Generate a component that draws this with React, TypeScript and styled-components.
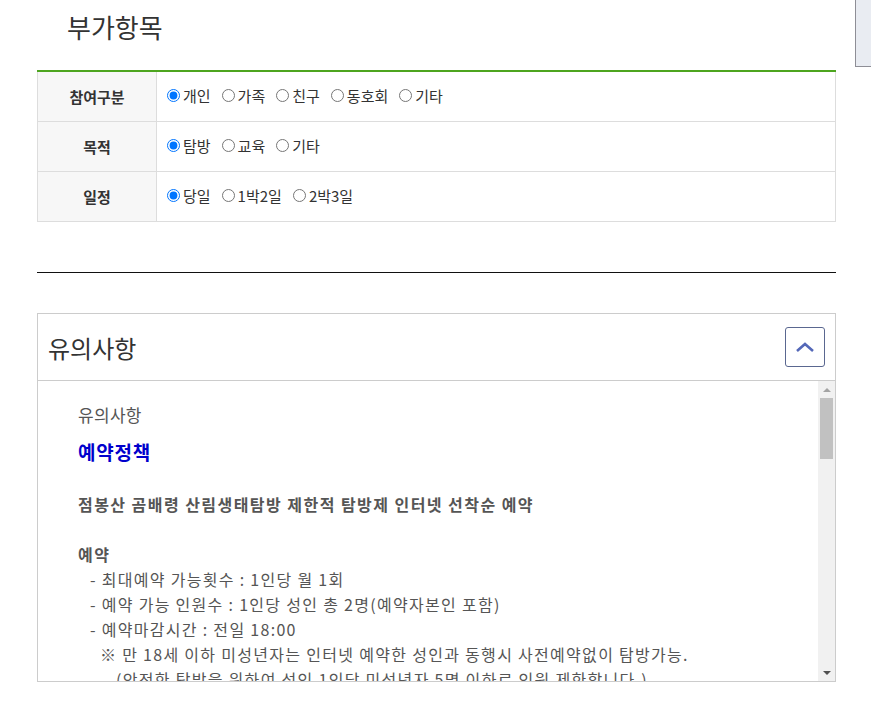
import styled, { createGlobalStyle } from "styled-components";

const GlobalStyle = createGlobalStyle`
    html, body {
        margin: 0;
        padding: 0;
        background: #fff;
        font-family: "Noto Sans CJK KR", "Noto Sans", sans-serif;
        color: #333;
    }
    * { box-sizing: border-box; }
`;

const Page = styled.div`
    position: relative;
    width: 871px;
    padding: 0 35px 0 37px;
`;

const SideTab = styled.div`
    position: absolute;
    top: -2px;
    right: 0;
    width: 16px;
    height: 69px;
    background: #e9ecf2;
    border: 1px solid #8e8e96;
    border-right: none;
`;

const SectionTitle = styled.h2`
    margin: 0;
    padding: 8px 0 0 30px;
    height: 70px;
    font-size: 26px;
    font-weight: 400;
    color: #333;
`;

const Table = styled.div`
    border-top: 2px solid #4da51f;
`;

const Row = styled.div`
    display: flex;
    height: 50px;
    border-bottom: 1px solid #ddd;
`;

const HeadCell = styled.div`
    width: 120px;
    flex-shrink: 0;
    display: flex;
    align-items: center;
    justify-content: center;
    background: #f7f7f7;
    border-left: 1px solid #ddd;
    border-right: 1px solid #ddd;
    font-size: 15px;
    font-weight: 700;
    color: #333;
`;

const BodyCell = styled.div`
    flex: 1;
    display: flex;
    align-items: center;
    padding: 0 0 2px 10px;
    border-right: 1px solid #ddd;
    gap: 11px;
`;

const RadioLabel = styled.label`
    display: flex;
    align-items: center;
    font-size: 15px;
    color: #333;

    & input {
        width: 13px;
        height: 13px;
        margin: 0 3px 0 0;
    }
`;

const Divider = styled.hr`
    margin: 50px 0 40px;
    border: none;
    border-top: 1px solid #111;
`;

const NoticeBox = styled.div`
    border: 1px solid #ccc;
`;

const NoticeHeader = styled.div`
    height: 67px;
    display: flex;
    align-items: center;
    justify-content: space-between;
    padding: 0 10px 0 10px;
    border-bottom: 1px solid #ccc;
`;

const NoticeTitle = styled.h3`
    margin: 0;
    font-size: 24px;
    font-weight: 400;
    color: #333;
`;

const ToggleButton = styled.button`
    width: 40px;
    height: 40px;
    display: flex;
    align-items: center;
    justify-content: center;
    background: #fff;
    border: 1px solid #5a6790;
    border-radius: 3px;
    padding: 0;
`;

const NoticeBody = styled.div`
    height: 300px;
    display: flex;
`;

const NoticeContent = styled.div`
    flex: 1;
    overflow: hidden;
    padding: 21px 0 0 40px;
    color: #555;
`;

const ScrollTrack = styled.div`
    width: 17px;
    flex-shrink: 0;
    background: #f1f1f1;
    display: flex;
    flex-direction: column;
    align-items: center;
`;

const ScrollArrow = styled.div<{ down?: boolean }>`
    height: 17px;
    width: 100%;
    display: flex;
    align-items: center;
    justify-content: center;

    &::before {
        content: "";
        border-left: 4px solid transparent;
        border-right: 4px solid transparent;
        ${p => (p.down ? "border-top: 4px solid #505050;" : "border-bottom: 4px solid #a3a3a3;")}
    }
`;

const ScrollThumb = styled.div`
    width: 13px;
    height: 61px;
    background: #c1c1c1;
`;

const ScrollSpace = styled.div`
    flex: 1;
`;

const SubTitle = styled.p`
    margin: 0 0 11px;
    font-size: 17px;
    letter-spacing: 0.3px;
    color: #555;
`;

const PolicyTitle = styled.p`
    margin: 0 0 27px;
    font-size: 19px;
    letter-spacing: 0.8px;
    font-weight: 700;
    color: #0000cc;
`;

const TextLine = styled.p<{ bold?: boolean; indent?: number }>`
    margin: 0;
    min-height: 25px;
    line-height: 25px;
    font-size: 16px;
    letter-spacing: ${p => (p.bold ? 1.45 : 1.3)}px;
    font-weight: ${p => (p.bold ? 700 : 400)};
    padding-left: ${p => p.indent || 0}px;
    color: #555;
    white-space: pre;
`;

function RadioRow(props: { head: string; name: string; options: string[] }) {
    return (
        <Row>
            <HeadCell>{props.head}</HeadCell>
            <BodyCell>
                {props.options.map((o, i) => (
                    <RadioLabel key={o}>
                        <input type="radio" name={props.name} defaultChecked={i === 0} />
                        {o}
                    </RadioLabel>
                ))}
            </BodyCell>
        </Row>
    );
}

export default function App() {
    return (
        <Page>
            <GlobalStyle />
            <SideTab />
            <SectionTitle>부가항목</SectionTitle>
            <Table>
                <RadioRow head="참여구분" name="type" options={["개인", "가족", "친구", "동호회", "기타"]} />
                <RadioRow head="목적" name="purpose" options={["탐방", "교육", "기타"]} />
                <RadioRow head="일정" name="schedule" options={["당일", "1박2일", "2박3일"]} />
            </Table>
            <Divider />
            <NoticeBox>
                <NoticeHeader>
                    <NoticeTitle>유의사항</NoticeTitle>
                    <ToggleButton>
                        <svg width="20" height="12" viewBox="0 0 20 12">
                            <polyline points="2,10 10,3 18,10" fill="none" stroke="#5468b8" strokeWidth="2.6" />
                        </svg>
                    </ToggleButton>
                </NoticeHeader>
                <NoticeBody>
                    <NoticeContent>
                        <SubTitle>유의사항</SubTitle>
                        <PolicyTitle>예약정책</PolicyTitle>
                        <TextLine bold>점봉산 곰배령 산림생태탐방 제한적 탐방제 인터넷 선착순 예약</TextLine>
                        <TextLine />
                        <TextLine bold>예약</TextLine>
                        <TextLine indent={12}>- 최대예약 가능횟수 : 1인당 월 1회</TextLine>
                        <TextLine indent={12}>- 예약 가능 인원수 : 1인당 성인 총 2명(예약자본인 포함)</TextLine>
                        <TextLine indent={12}>- 예약마감시간 : 전일 18:00</TextLine>
                        <TextLine indent={22}>※ 만 18세 이하 미성년자는 인터넷 예약한 성인과 동행시 사전예약없이 탐방가능.</TextLine>
                        <TextLine indent={38}>(안전한 탐방을 위하여 성인 1인당 미성년자 5명 이하로 인원 제한합니다.)</TextLine>
                    </NoticeContent>
                    <ScrollTrack>
                        <ScrollArrow />
                        <ScrollThumb />
                        <ScrollSpace />
                        <ScrollArrow down />
                    </ScrollTrack>
                </NoticeBody>
            </NoticeBox>
        </Page>
    );
}
